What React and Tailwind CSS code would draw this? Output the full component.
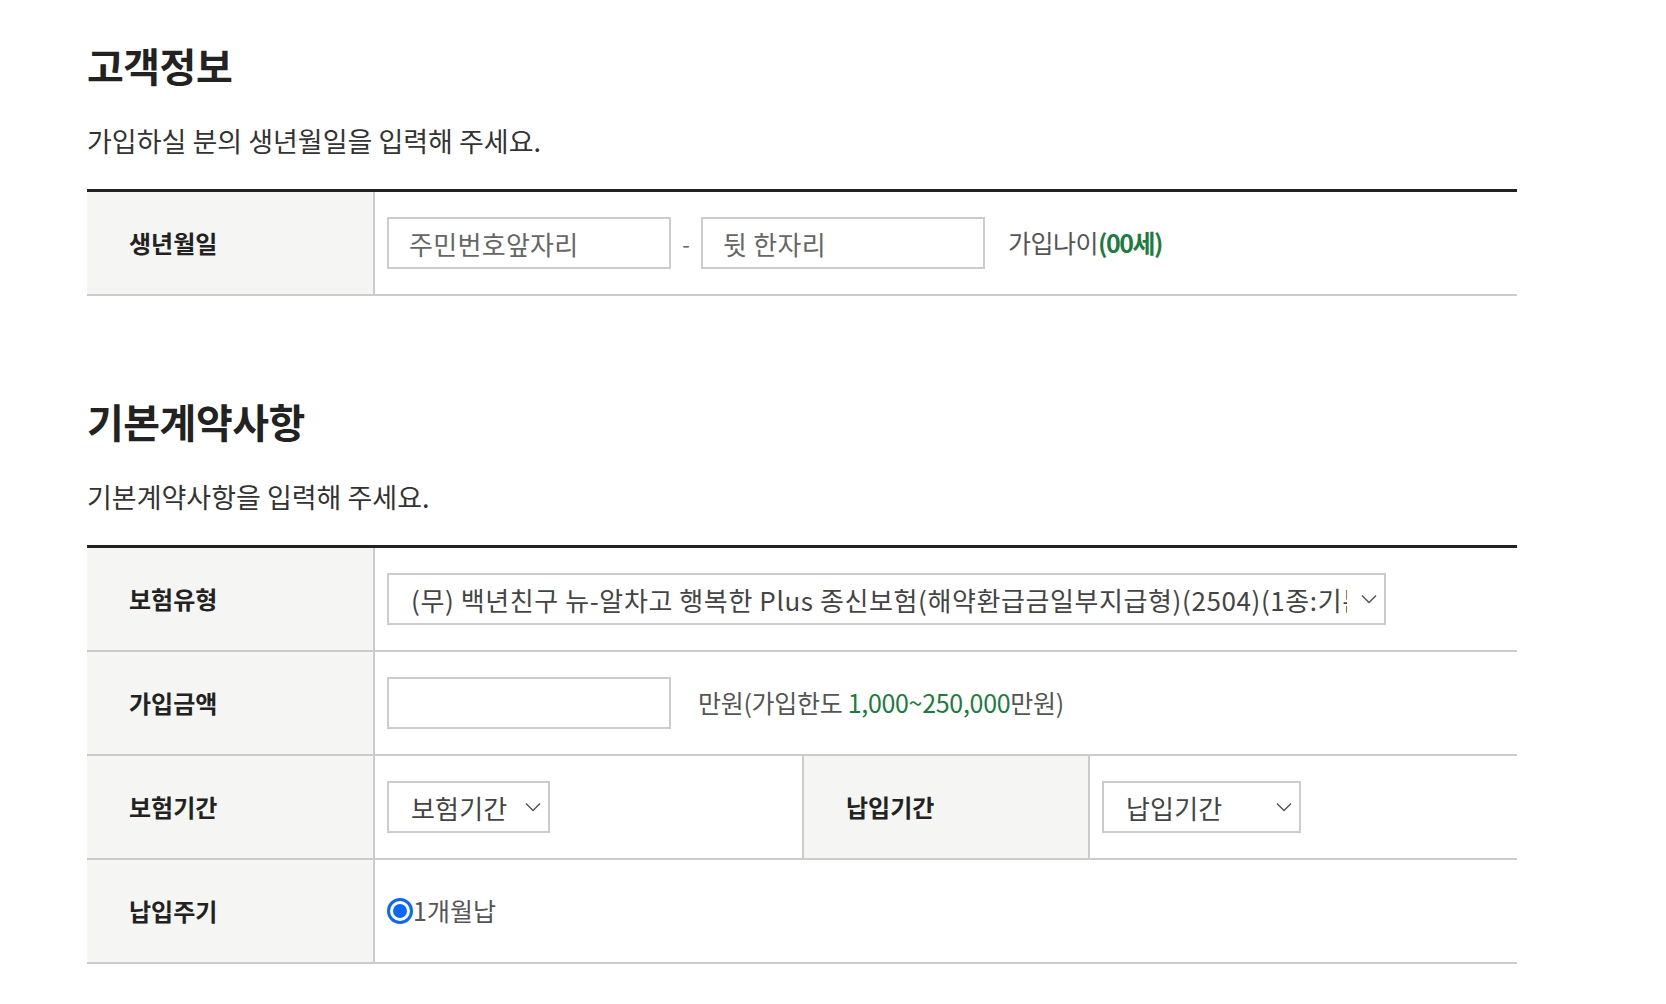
import React from 'react';

// Thin chevron used inside the fake selects
function Chevron() {
  return (
    <svg width="16" height="10" viewBox="0 0 16 10" className="shrink-0">
      <path d="M1 1.5 L8 8.5 L15 1.5" fill="none" stroke="#555" strokeWidth="1.5" />
    </svg>
  );
}

function SelectBox({ text, className = '', textClass = 'tracking-[0.2px]' }) {
  return (
    <div className={`h-[52px] border-2 border-[#cccccc] bg-white flex items-center pl-[22px] pr-[7px] ${className}`}>
      <span className={`flex-1 overflow-hidden whitespace-nowrap text-[26px] text-[#444] mr-[14px] ${textClass}`}>
        {text}
      </span>
      <Chevron />
    </div>
  );
}

function TextBox({ placeholder = '', className = '' }) {
  return (
    <div className={`h-[52px] w-[284px] border-2 border-[#cccccc] bg-white flex items-center pl-[20px] text-[26px] text-[#666] tracking-[0.3px] ${className}`}>
      {placeholder}
    </div>
  );
}

function Label({ children, className = 'w-[288px]' }) {
  return (
    <div className={`shrink-0 bg-[#f5f6f3] border-r-2 border-[#cccccc] flex items-center pl-[42px] text-[24px] font-bold text-[#222] ${className}`}>
      {children}
    </div>
  );
}

function Row({ children }) {
  return <div className="flex h-[104px] border-b-2 border-[#cccccc]">{children}</div>;
}

function Section({ title, desc, children, className = '' }) {
  return (
    <section className={className}>
      <h2 className="text-[40px] leading-[44px] font-bold text-[#222] tracking-[-0.5px]">{title}</h2>
      <p className="mt-[38px] text-[27px] leading-[32px] text-[#333]">{desc}</p>
      <div className="mt-[32px] border-t-[3px] border-[#222]">{children}</div>
    </section>
  );
}

export default function App() {
  return (
    <div className="min-h-screen bg-white pl-[87px] pt-[43px] font-['Noto_Sans_CJK_KR','Noto_Sans',sans-serif]">
      <div className="w-[1430px]">
        {/* 고객정보 */}
        <Section title="고객정보" desc="가입하실 분의 생년월일을 입력해 주세요.">
          <Row>
            <Label>생년월일</Label>
            <div className="flex-1 flex items-center pl-[12px]">
              <TextBox placeholder="주민번호앞자리" />
              <span className="w-[30px] text-center text-[22px] text-[#666]">-</span>
              <TextBox placeholder="뒷 한자리" />
              <span className="ml-[23px] text-[25px] text-[#555] tracking-[-0.5px]">
                가입나이<b className="text-[#1e7b40] font-bold tracking-[-1.5px]">(00세)</b>
              </span>
            </div>
          </Row>
        </Section>

        {/* 기본계약사항 */}
        <Section title="기본계약사항" desc="기본계약사항을 입력해 주세요." className="mt-[103px]">
          <Row>
            <Label>보험유형</Label>
            <div className="flex-1 flex items-center pl-[12px]">
              <SelectBox
                className="w-[999px]"
                textClass="tracking-[0.6px]"
                text="(무) 백년친구 뉴-알차고 행복한 Plus 종신보험(해약환급금일부지급형)(2504)(1종:기본형)"
              />
            </div>
          </Row>
          <Row>
            <Label>가입금액</Label>
            <div className="flex-1 flex items-center pl-[12px]">
              <TextBox />
              <span className="ml-[27px] text-[25px] text-[#555] tracking-[-0.3px]">
                만원(가입한도 <span className="text-[#1e7b40]">1,000~250,000</span>만원)
              </span>
            </div>
          </Row>
          <Row>
            <Label>보험기간</Label>
            <div className="w-[429px] shrink-0 border-r-2 border-[#cccccc] flex items-center pl-[12px]">
              <SelectBox className="w-[163px]" text="보험기간" />
            </div>
            <Label className="w-[286px]">납입기간</Label>
            <div className="flex-1 flex items-center pl-[12px]">
              <SelectBox className="w-[199px]" text="납입기간" />
            </div>
          </Row>
          <Row>
            <Label>납입주기</Label>
            <div className="flex-1 flex items-center pl-[12px]">
              <span className="w-[26px] h-[26px] rounded-full border-[3px] border-[#0b69f5] p-[3px] flex">
                <span className="flex-1 rounded-full bg-[#0b69f5]" />
              </span>
              <span className="text-[25px] text-[#555]">1개월납</span>
            </div>
          </Row>
        </Section>
      </div>
    </div>
  );
}
